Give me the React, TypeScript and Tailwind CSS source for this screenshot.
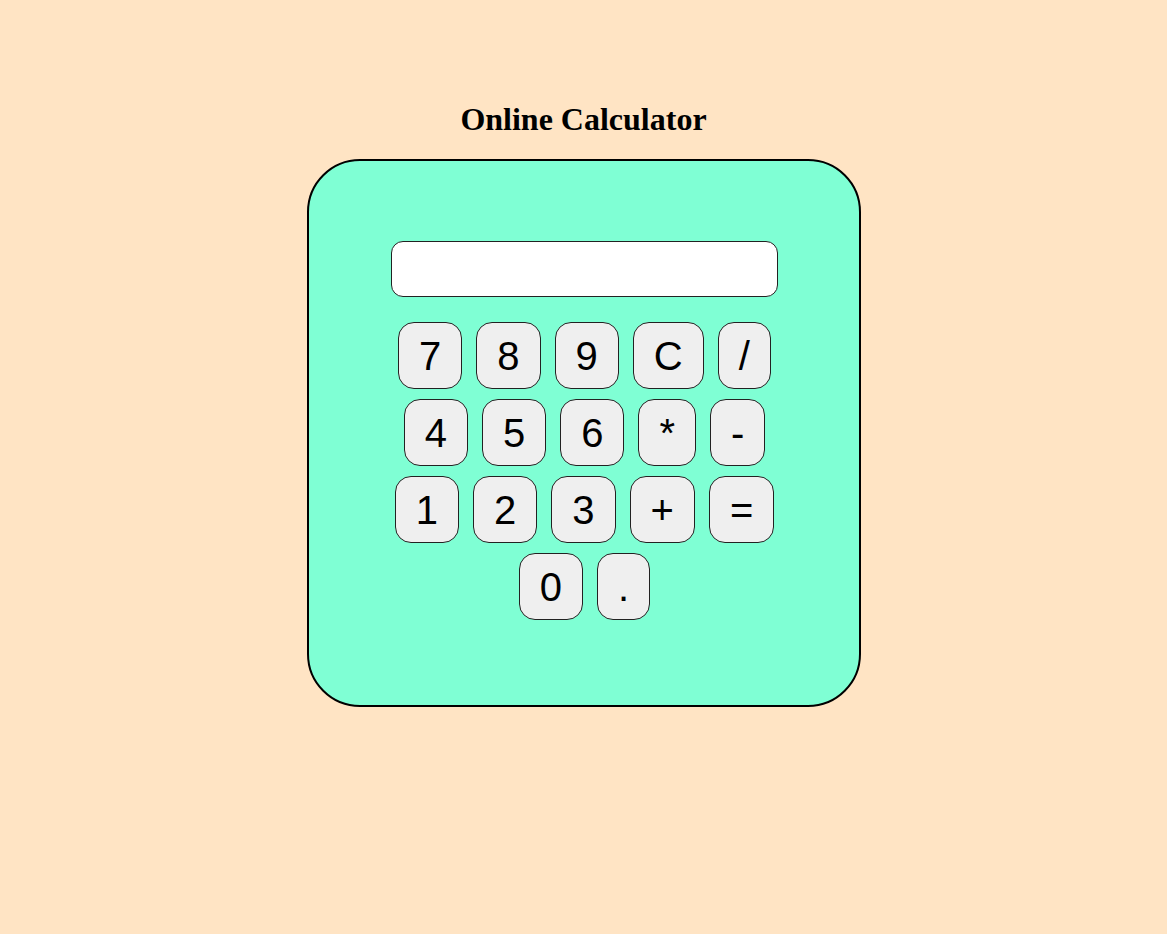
import React from 'react';

const rows: string[][] = [
  ['7', '8', '9', 'C', '/'],
  ['4', '5', '6', '*', '-'],
  ['1', '2', '3', '+', '='],
  ['0', '.'],
];

export default function App() {
  return (
    <div className="min-h-[934px] w-full bg-[#ffe4c4] flex flex-col items-center pt-[101px]">
      <h1 className="text-[32px] leading-[36px] font-bold text-black font-['Liberation_Serif',serif] mb-[22px]">
        Online Calculator
      </h1>
      <div className="w-[554px] h-[548px] bg-[#7fffd4] border-2 border-black rounded-[53px] flex flex-col items-center pt-[80px] pl-[2px]">
        <input
          type="text"
          readOnly
          className="w-[387px] h-[56px] bg-white border border-[#222] rounded-[12px] outline-none"
        />
        <div className="mt-[25px] flex flex-col gap-[10px]">
          {rows.map((row, i) => (
            <div key={i} className="flex justify-center gap-[14px]">
              {row.map((key) => (
                <button
                  key={key}
                  className="h-[67px] px-[20px] bg-[#efefef] border border-[#222] rounded-[16px] text-[40px] leading-[46px] text-black font-['Liberation_Sans',Arial,sans-serif] flex items-center justify-center"
                >
                  {key}
                </button>
              ))}
            </div>
          ))}
        </div>
      </div>
    </div>
  );
}
